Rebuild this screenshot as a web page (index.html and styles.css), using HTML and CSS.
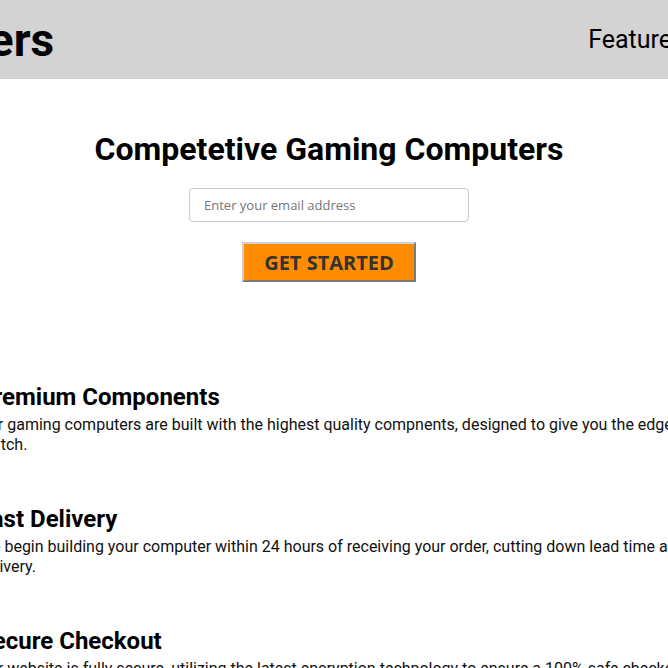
FILE: index.html
```html
<!DOCTYPE html>
<html lang="en">
<head>
<meta charset="utf-8">
<title>Competetive Gaming Computers</title>
<link rel="stylesheet" href="styles.css">
</head>
<body>
<div class="page">
  <div class="container">
    <header class="header">
      <div class="logo">Gamers</div>
      <nav class="nav">
        <a class="nav-link" href="#features">Features</a>
        <a class="nav-link" href="#how">How It Works</a>
        <a class="nav-link" href="#pricing">Pricing</a>
      </nav>
    </header>
    <section class="hero">
      <h1 class="hero-title">Competetive Gaming Computers</h1>
      <form class="signup">
        <input class="email" type="email" placeholder="Enter your email address">
        <button class="cta" type="button">GET STARTED</button>
      </form>
    </section>
    <section class="features" id="features">
      <div class="feature">
        <h2 class="feature-title">Premium Components</h2>
        <p class="feature-text">Our gaming computers are built with the highest quality compnents, designed to give you the edge in every match.</p>
      </div>
      <div class="feature">
        <h2 class="feature-title">Fast Delivery</h2>
        <p class="feature-text">We begin building your computer within 24 hours of receiving your order, cutting down lead time and wait for delivery.</p>
      </div>
      <div class="feature">
        <h2 class="feature-title">Secure Checkout</h2>
        <p class="feature-text">Our website is fully secure, utilizing the latest encryption technology to ensure a 100% safe checkout experience.</p>
      </div>
    </section>
  </div>
</div>
</body>
</html>
```
FILE: styles.css
```css
html, body {
  margin: 0;
  padding: 0;
  background: #ffffff;
}
body {
  font-family: Roboto, "Liberation Sans", sans-serif;
  color: #000000;
}
.page {
  display: flex;
  justify-content: center;
  overflow: hidden;
  min-height: 668px;
}
.container {
  flex: 0 0 704px;
  width: 704px;
}
.header {
  height: 79px;
  background: #d3d3d3;
  display: flex;
  align-items: center;
  width: 1000px;
}
.logo {
  flex: none;
  font-size: 46px;
  font-weight: 700;
  margin-left: -89px;
  line-height: 1;
}
.nav {
  flex: none;
  display: flex;
  gap: 30px;
  margin-left: 534px;
}
.nav-link {
  font-size: 25px;
  color: #000000;
  text-decoration: none;
}
.hero {
  display: flex;
  flex-direction: column;
  align-items: center;
  padding-top: 51px;
  padding-right: 10px;
  height: 268px;
  box-sizing: border-box;
}
.hero-title {
  margin: 0;
  font-size: 32px;
  font-weight: 700;
  line-height: 38px;
}
.signup {
  display: flex;
  flex-direction: column;
  align-items: center;
  gap: 20px;
  margin-top: 20px;
}
.email {
  width: 280px;
  height: 34px;
  box-sizing: border-box;
  border: 1px solid #cfc9c4;
  border-radius: 4px;
  padding: 0 14px;
  font-family: "Open Sans", sans-serif;
  font-size: 13px;
  color: #333333;
}
.email::placeholder {
  color: #757575;
}
.cta {
  width: 174px;
  height: 40px;
  background: #ff8c00;
  border: 2px outset #d0d0d0;
  font-family: "Open Sans", sans-serif;
  font-weight: 700;
  font-size: 20px;
  color: #333333;
  padding: 0;
}
.features {
  display: flex;
  flex-direction: column;
  gap: 50px;
  padding-top: 36px;
  margin-left: -4px;
}
.feature-title {
  margin: 0;
  font-size: 24px;
  font-weight: 700;
  line-height: 28px;
}
.feature-text {
  margin: 4px 0 0;
  width: 780px;
  font-size: 16px;
  line-height: 20px;
  color: #111111;
}
```
